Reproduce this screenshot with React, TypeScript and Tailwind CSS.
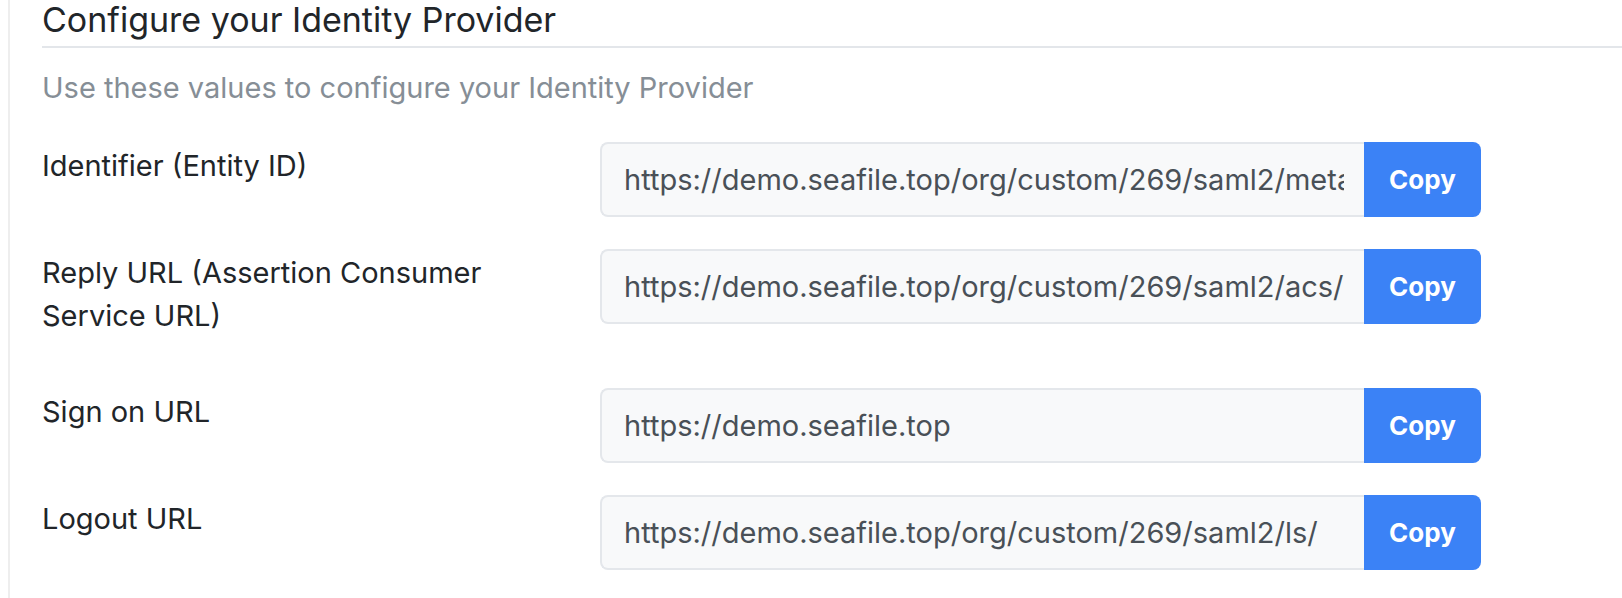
import React from "react";

const rows: { label: string; value: string }[] = [
  { label: "Identifier (Entity ID)", value: "https://demo.seafile.top/org/custom/269/saml2/metadata/" },
  { label: "Reply URL (Assertion Consumer Service URL)", value: "https://demo.seafile.top/org/custom/269/saml2/acs/" },
  { label: "Sign on URL", value: "https://demo.seafile.top" },
  { label: "Logout URL", value: "https://demo.seafile.top/org/custom/269/saml2/ls/" },
];

export default function App() {
  return (
    <div className="min-h-[598px] bg-white" style={{ fontFamily: "Inter, 'Noto Sans', 'Liberation Sans', sans-serif" }}>
      <div className="ml-[8px] min-h-[598px] border-l-2 border-[#eeeeee] pl-[32px]">
        <h2 className="text-[34px] leading-[40px] pb-[6px] font-normal text-[#212529] border-b-2 border-[#e3e6ea]">
          Configure your Identity Provider
        </h2>
        <p className="mt-[19px] text-[29px] leading-[42px] text-[#868e96]">
          Use these values to configure your Identity Provider
        </p>
        <div className="mt-[33px] flex flex-col gap-[32px]">
          {rows.map((r) => (
            <div key={r.label} className="flex items-start">
              <div className="w-[558px] shrink-0 pr-[50px] pt-[2px] pb-[19px] text-[29px] leading-[43px] text-[#212529]">
                {r.label}
              </div>
              <div className="flex h-[75px]">
                <input
                  readOnly
                  value={r.value}
                  className="w-[764px] h-[75px] rounded-l-[8px] border-2 border-r-0 border-[#e4e7eb] bg-[#f8f9fa] pl-[22px] pr-[20px] text-[29px] text-[#495057] outline-none"
                  style={{ fontFamily: "Inter, 'Noto Sans', 'Liberation Sans', sans-serif" }}
                />
                <button className="w-[117px] h-[75px] rounded-r-[8px] bg-[#3b82f6] text-[26px] font-bold text-white">
                  Copy
                </button>
              </div>
            </div>
          ))}
        </div>
      </div>
    </div>
  );
}
